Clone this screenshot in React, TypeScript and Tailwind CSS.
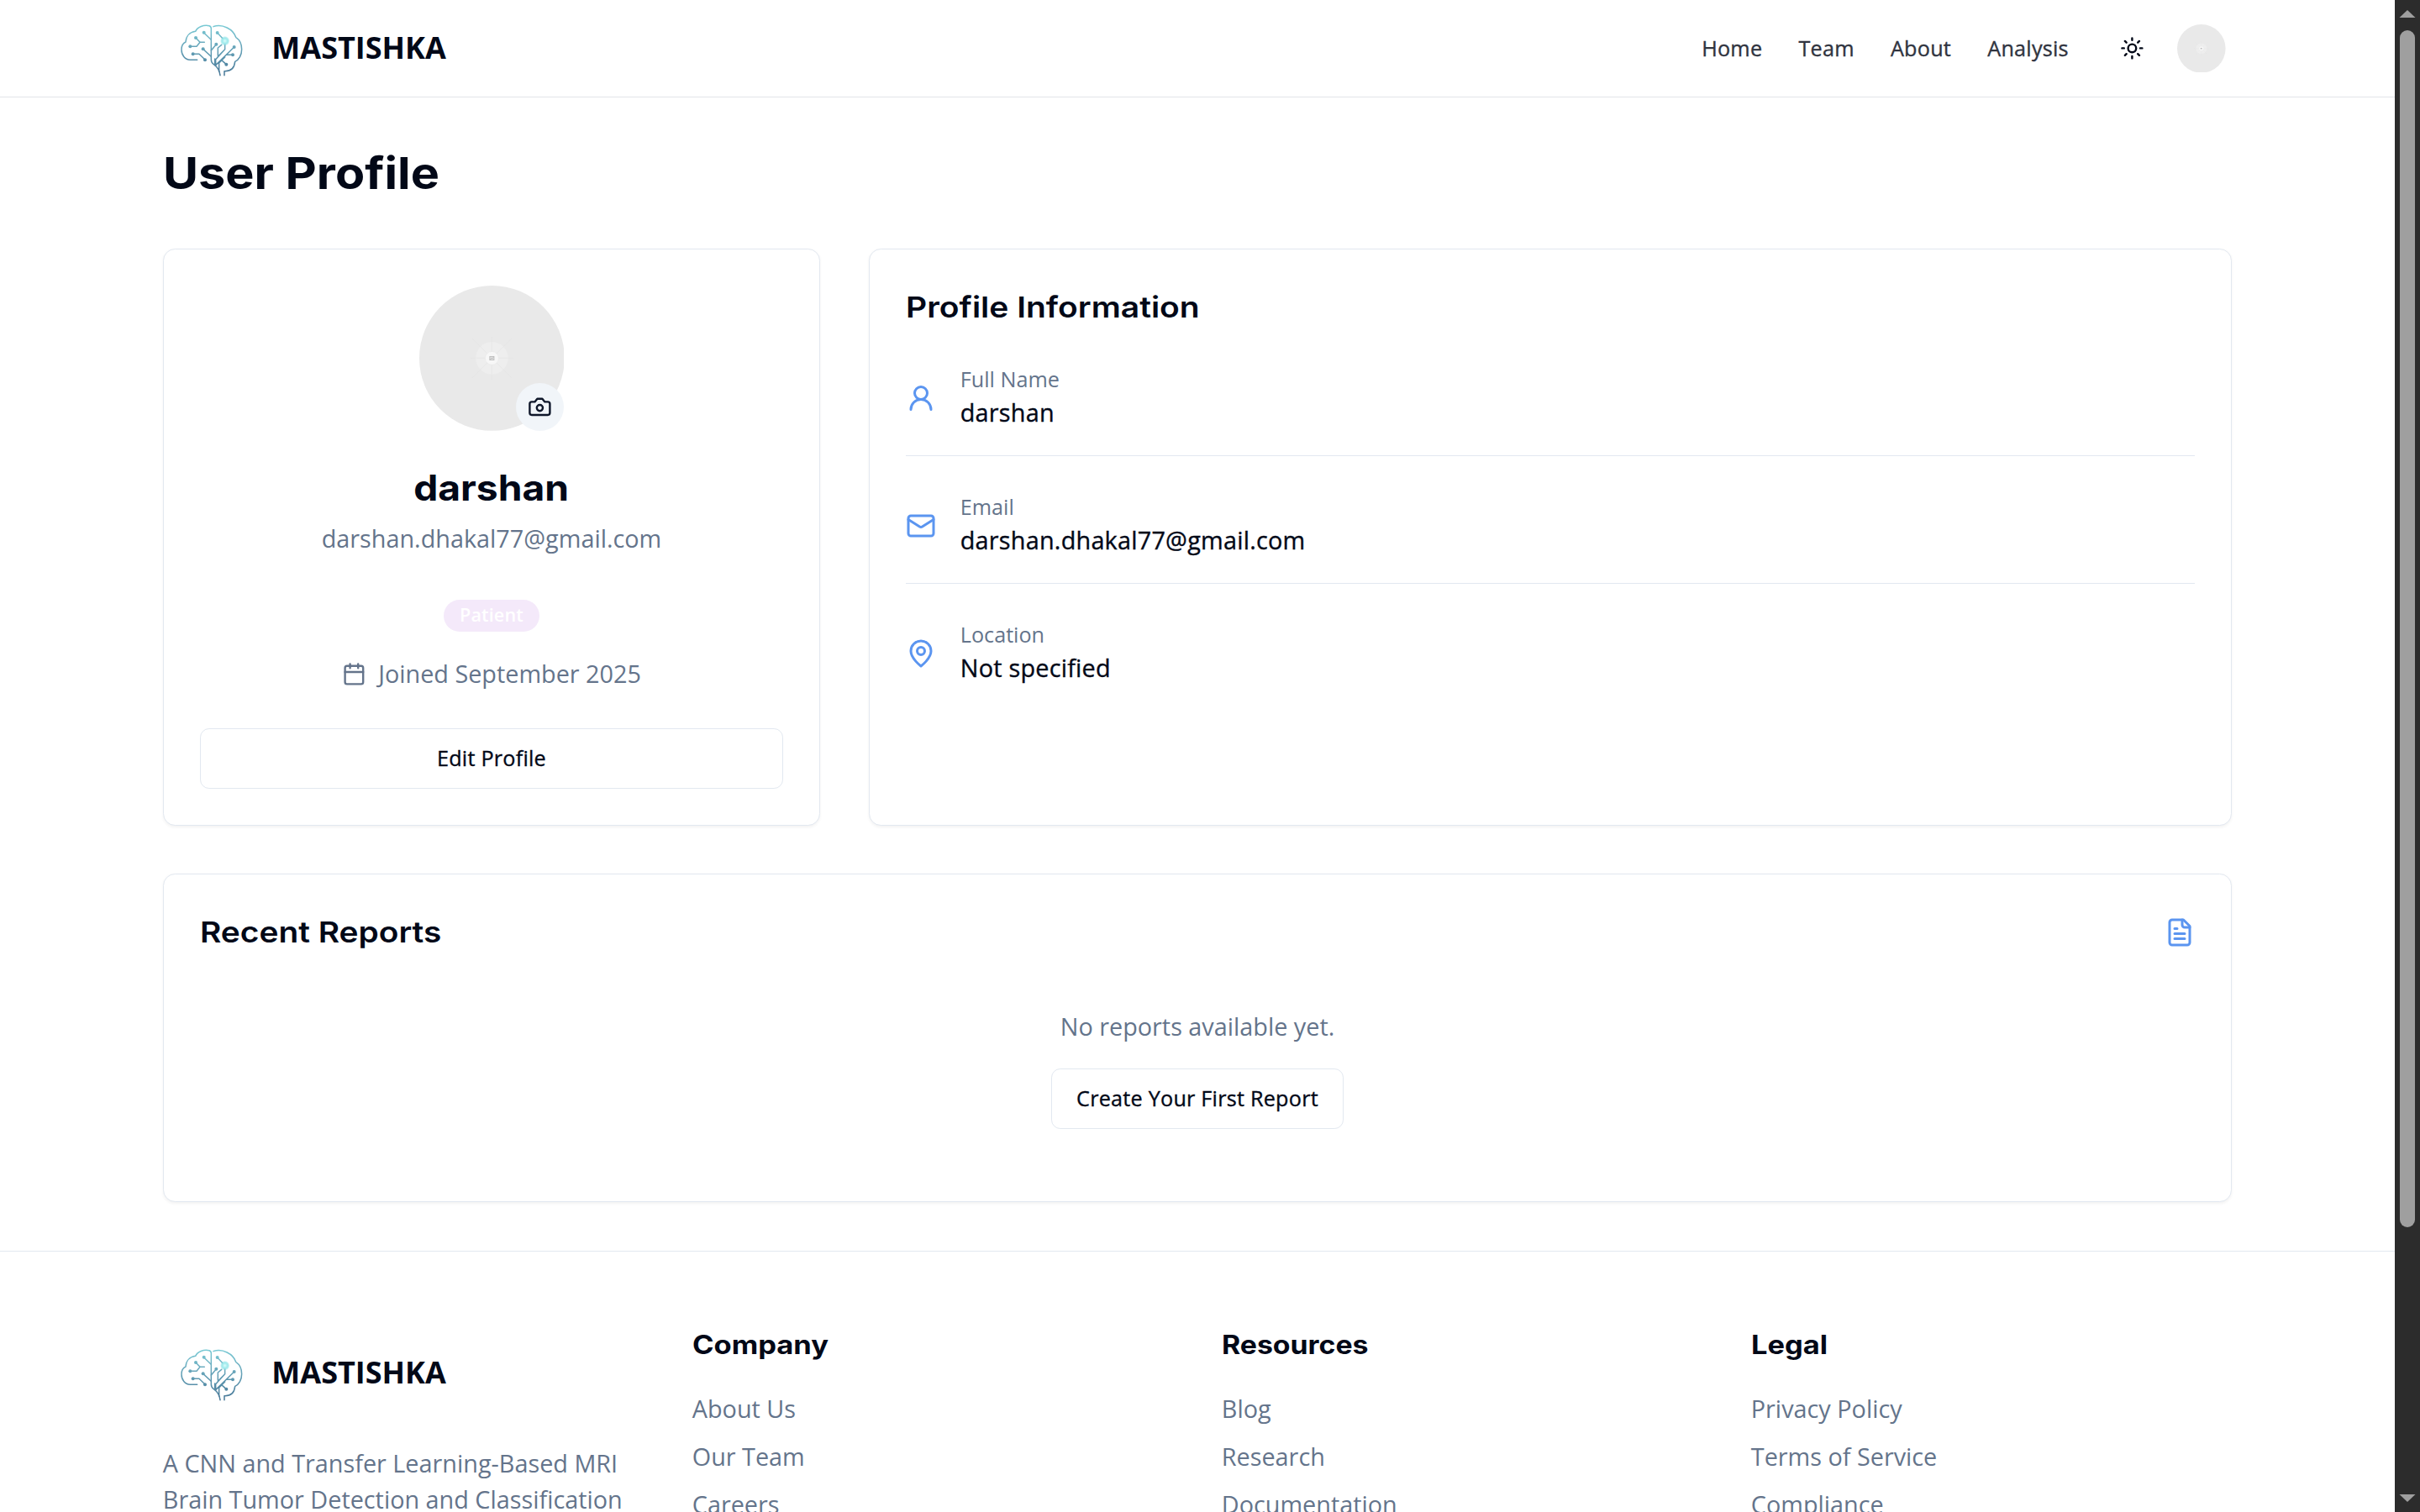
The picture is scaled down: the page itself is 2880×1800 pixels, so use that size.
import React from "react";

const open = "font-['Open_Sans',sans-serif]";

type IconProps = { className?: string; children: React.ReactNode };

function Icon({ className, children }: IconProps) {
  return (
    <svg
      viewBox="0 0 24 24"
      fill="none"
      stroke="currentColor"
      strokeWidth="2"
      strokeLinecap="round"
      strokeLinejoin="round"
      className={className}
    >
      {children}
    </svg>
  );
}

const SunIcon = () => (
  <Icon className="h-4 w-4">
    <circle cx="12" cy="12" r="4" />
    <path d="M12 2v2M12 20v2M4.93 4.93l1.41 1.41M17.66 17.66l1.41 1.41M2 12h2M20 12h2M6.34 17.66l-1.41 1.41M19.07 4.93l-1.41 1.41" />
  </Icon>
);

const CameraIcon = () => (
  <Icon className="h-4 w-4">
    <path d="M14.5 4h-5L7 7H4a2 2 0 0 0-2 2v9a2 2 0 0 0 2 2h16a2 2 0 0 0 2-2V9a2 2 0 0 0-2-2h-3l-2.5-3z" />
    <circle cx="12" cy="13" r="3" />
  </Icon>
);

const CalendarIcon = () => (
  <Icon className="h-4 w-4">
    <path d="M8 2v4M16 2v4" />
    <rect width="18" height="18" x="3" y="4" rx="2" />
    <path d="M3 10h18" />
  </Icon>
);

const UserIcon = () => (
  <Icon className="h-5 w-5">
    <circle cx="12" cy="8" r="5" />
    <path d="M20 21a8 8 0 0 0-16 0" />
  </Icon>
);

const MailIcon = () => (
  <Icon className="h-5 w-5">
    <rect width="20" height="16" x="2" y="4" rx="2" />
    <path d="m22 7-8.97 5.7a1.94 1.94 0 0 1-2.06 0L2 7" />
  </Icon>
);

const PinIcon = () => (
  <Icon className="h-5 w-5">
    <path d="M20 10c0 6-8 12-8 12s-8-6-8-12a8 8 0 0 1 16 0Z" />
    <circle cx="12" cy="10" r="3" />
  </Icon>
);

const FileIcon = () => (
  <Icon className="h-5 w-5 text-[#5b95f0]">
    <path d="M15 2H6a2 2 0 0 0-2 2v16a2 2 0 0 0 2 2h12a2 2 0 0 0 2-2V7Z" />
    <path d="M14 2v4a2 2 0 0 0 2 2h4" />
    <path d="M10 9H8M16 13H8M16 17H8" />
  </Icon>
);

/* Brain outline with circuit traces and one glowing node. */
function BrainLogo({ id }: { id: string }) {
  return (
    <svg viewBox="0 0 345.6 345.6" className="h-16 w-16 shrink-0" fill="none">
      <defs>
        <linearGradient id={id} gradientUnits="userSpaceOnUse" x1="0" y1="85" x2="0" y2="270">
          <stop offset="0" stopColor="#7accd6" />
          <stop offset="0.4" stopColor="#6aa9bd" />
          <stop offset="1" stopColor="#467696" />
        </linearGradient>
        <radialGradient id={id + "-node"}>
          <stop offset="0" stopColor="#d9fbfa" />
          <stop offset="0.6" stopColor="#9eeaec" />
          <stop offset="1" stopColor="#7fdfe4" stopOpacity="0.3" />
        </radialGradient>
      </defs>
      <g transform="translate(-41 0)" stroke={`url(#${id})`} strokeWidth="4.5" strokeLinecap="round" strokeLinejoin="round">
        <path d="M163 214H138C119 213 107 197 107 177C107 163 113 154 122 150C123 130 136 115 157 112C164 96 186 88 206 92Q213 94 213 102V213Q213 224 222 230C236 240 243 252 245 269" />
        <path d="M221 95C253 84 292 104 301 133C316 143 322 158 322 176C322 197 312 214 298 220C296 242 283 255 260 254V269" />
        <path d="M158 135L173 151L161 166H139M174 151H189M187 117L212 141M184 175L212 201M148 193H170L191 213M213 180L230 160" />
        <path d="M235 117L262 146V176L237 202M237 199V171L250 160M295 168L229 233M229 233V212L262 176M226 229V210M290 196H268M250 215L267 230M241 256V225L262 204" />
      </g>
      <g transform="translate(-41 0)" fill={`url(#${id})`}>
        <circle cx="158" cy="135" r="6" />
        <circle cx="187" cy="116" r="6" />
        <circle cx="138" cy="166" r="6" />
        <circle cx="184" cy="175" r="6" />
        <circle cx="148" cy="193" r="6" />
        <circle cx="191" cy="214" r="6" />
        <circle cx="231" cy="158" r="6" />
        <circle cx="235" cy="117" r="6" />
        <circle cx="295" cy="168" r="6" />
        <circle cx="290" cy="196" r="6" />
        <circle cx="267" cy="230" r="6" />
      </g>
      <circle cx="221" cy="146" r="16" fill={`url(#${id}-node)`} />
    </svg>
  );
}

function Brand({ id }: { id: string }) {
  return (
    <div className="flex h-16 items-center gap-2">
      <BrainLogo id={id} />
      <span className="text-xl font-bold">MASTISHKA</span>
    </div>
  );
}

function AvatarPicture({ className }: { className: string }) {
  return (
    <svg viewBox="0 0 96 96" className={className}>
      <circle cx="48" cy="48" r="48" fill="#e9e9e9" />
      <path d="M48 34V62M34 48H62M35 35L61 61M61 35L35 61" stroke="#e4e4e4" strokeWidth="0.5" />
      <circle cx="48" cy="48" r="10.7" fill="#eeeeee" />
      <path d="M48 37.5V58.5M37.5 48H58.5M40.5 40.5L55.5 55.5M55.5 40.5L40.5 55.5" stroke="#e6e6e6" strokeWidth="0.5" />
      <circle cx="48" cy="48" r="4.4" fill="#f7f7f7" stroke="#e6e6e6" strokeWidth="0.3" />
      <rect x="46.6" y="46.9" width="2.8" height="2.3" fill="#e2e2e2" stroke="#b9b9b9" strokeWidth="0.5" />
      <path d="M47 48.7l.8-.9.5.5.7-.9" stroke="#b0b0b0" strokeWidth="0.4" fill="none" />
    </svg>
  );
}

function Heading({ className, children }: { className: string; children: React.ReactNode }) {
  return <h2 className={"font-['Inter',sans-serif] " + className}>{children}</h2>;
}

const card = "rounded-lg border border-[#e2e8f0] bg-white shadow-xs";
const medium = "font-medium tracking-[0.13px] [-webkit-text-stroke:0.2px_currentColor]";

const details = [
  { icon: <UserIcon />, label: "Full Name", value: "darshan" },
  { icon: <MailIcon />, label: "Email", value: "darshan.dhakal77@gmail.com" },
  { icon: <PinIcon />, label: "Location", value: "Not specified" },
];

const columns = [
  { title: "Company", stretch: "scale-x-[1.103]", links: ["About Us", "Our Team", "Careers"] },
  { title: "Resources", stretch: "scale-x-[1.08]", links: ["Blog", "Research", "Documentation"] },
  { title: "Legal", stretch: "scale-x-[1.1]", links: ["Privacy Policy", "Terms of Service", "Compliance"] },
];

function Header() {
  return (
    <header className="border-b border-[#e2e5e9]">
      <div className="mx-auto flex h-16 max-w-[1400px] items-center justify-between px-4">
        <Brand id="brain-top" />
        <div className="flex items-center">
          <nav className={"mr-6 flex gap-6 pb-px text-sm text-[#30343f] " + medium}>
            <a>Home</a>
            <a>Team</a>
            <a>About</a>
            <a>Analysis</a>
          </nav>
          <button className="mr-2 flex h-9 w-9 items-center justify-center">
            <SunIcon />
          </button>
          <button className="flex h-10 w-10 items-center justify-center">
            <AvatarPicture className="h-8 w-8" />
          </button>
        </div>
      </div>
    </header>
  );
}

function ProfileCard() {
  return (
    <section className={card + " flex flex-col items-center p-6"}>
      <div className="relative h-24 w-24">
        <AvatarPicture className="h-24 w-24" />
        <button className="absolute right-0 bottom-0 flex h-8 w-8 items-center justify-center rounded-full bg-[#f1f5f9] text-[#0f172a]">
          <CameraIcon />
        </button>
      </div>
      <Heading className="mt-[22px] scale-x-[1.106] text-[23.2px]/8 font-bold">darshan</Heading>
      <p className="mt-[5px] text-[#64748b]">darshan.dhakal77@gmail.com</p>
      <span className="mt-[28.4px] rounded-full border border-transparent bg-[#f4e9fa] px-2.5 py-0.5 text-xs font-semibold tracking-[0.06px] text-white">
        Patient
      </span>
      <div className="mt-4 flex items-center gap-2 text-[#64748b]">
        <CalendarIcon />
        <span>Joined September 2025</span>
      </div>
      <button className={"mt-auto h-10 w-full rounded-md border border-[#e2e8f0] pb-px text-sm " + medium}>
        Edit Profile
      </button>
    </section>
  );
}

function InformationCard() {
  return (
    <section className={card + " col-span-2 p-6"}>
      <Heading className="mb-6 origin-left scale-x-[1.123] text-[19.3px]/7 font-semibold">
        <span className="inline-block">Profile Information</span>
      </Heading>
      <div className="flex flex-col gap-6">
        {details.map((item, i) => (
          <div
            key={item.label}
            className={i < 2 ? "flex items-center gap-4 border-b border-[#e2e8f0] pb-4" : "flex items-center gap-4"}
          >
            <span className="text-[#5b95f0]">{item.icon}</span>
            <div className="-mt-[0.6px] mb-[0.6px]">
              <p className="text-sm text-[#64748b]">{item.label}</p>
              <p className={medium}>{item.value}</p>
            </div>
          </div>
        ))}
      </div>
    </section>
  );
}

function ReportsCard() {
  return (
    <section className={card + " mt-8 p-6"}>
      <div className="flex items-center justify-between">
        <Heading className="origin-left scale-x-[1.119] text-[19.3px]/7 font-semibold">Recent Reports</Heading>
        <FileIcon />
      </div>
      <div className="flex flex-col items-center pt-9 pb-6">
        <p className="mb-4 text-[#64748b]">No reports available yet.</p>
        <button className={"h-10 rounded-md border border-[#e2e8f0] px-4 pb-px text-sm " + medium}>
          Create Your First Report
        </button>
      </div>
    </section>
  );
}

function Footer() {
  return (
    <footer className="border-t border-[#e2e8f0]">
      <div className="mx-auto grid max-w-[1400px] grid-cols-4 gap-8 px-4 py-12">
        <div>
          <div className="mt-[0.5px] -mb-[0.5px]">
            <Brand id="brain-bottom" />
          </div>
          <p className="mt-4 text-[#64748b]">
            A CNN and Transfer Learning-Based MRI Brain Tumor Detection and Classification
          </p>
        </div>
        {columns.map((column) => (
          <div key={column.title}>
            <Heading className={"mb-4 origin-left text-[17.4px]/7 font-bold " + column.stretch}>{column.title}</Heading>
            <ul className="flex flex-col gap-[7.7px] text-[#64748b]">
              {column.links.map((link) => (
                <li key={link}>{link}</li>
              ))}
            </ul>
          </div>
        ))}
      </div>
    </footer>
  );
}

function Scrollbar() {
  return (
    <div className="flex h-[1800px] w-[30px] flex-col items-center bg-[#2c2c2c]">
      <svg viewBox="0 0 30 36" className="h-[36px] w-[30px] shrink-0">
        <path d="M15 12L24.5 21H5.5Z" fill="#9f9f9f" />
      </svg>
      <div className="h-[1425px] w-[18px] rounded-full bg-[#9f9f9f]" />
      <svg viewBox="0 0 30 36" className="mt-auto h-[36px] w-[30px] shrink-0">
        <path d="M15 24L24.5 15H5.5Z" fill="#9f9f9f" />
      </svg>
    </div>
  );
}

export default function App() {
  return (
    <div className={"flex h-[1800px] w-[2880px] overflow-hidden bg-white text-[#020817] " + open}>
      <div className="h-[1000px] w-[1583.33px] overflow-hidden [zoom:1.8]">
        <Header />
        <main className="mx-auto max-w-[1400px] px-4 py-8">
          <Heading className="mb-8 origin-left scale-x-[1.102] text-[29px]/9 font-bold">User Profile</Heading>
          <div className="grid h-[381.4px] grid-cols-3 gap-8">
            <ProfileCard />
            <InformationCard />
          </div>
          <ReportsCard />
        </main>
        <Footer />
      </div>
      <Scrollbar />
    </div>
  );
}
